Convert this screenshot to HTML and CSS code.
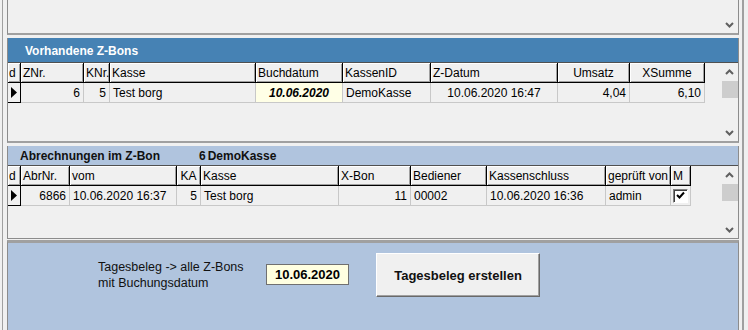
FILE: index.html
```html
<!DOCTYPE html>
<html lang="de">
<head>
  <meta charset="UTF-8" />
  <title>Z-Bons</title>
  <link rel="stylesheet" href="styles.css">
</head>
<body>
  <div class="shell">
    <div class="rail-left"></div>
    <div class="main">

      <div class="panel panel-top">
        <div class="filler"></div>
        <div class="vscroll vscroll-end">
          <div class="arrow"><svg width="9" height="6" viewBox="0 0 9 6"><path d="M1 1 L4.5 4.5 L8 1" fill="none" stroke="#606060" stroke-width="2"/></svg></div>
        </div>
      </div>

      <section class="panel panel-z">
        <div class="caption caption-dark">Vorhandene Z-Bons</div>
        <div class="panel-body">
          <div class="grid grid-z">
            <div class="hd hd-d">d</div>
            <div class="hd">ZNr.</div>
            <div class="hd">KNr.</div>
            <div class="hd">Kasse</div>
            <div class="hd">Buchdatum</div>
            <div class="hd">KassenID</div>
            <div class="hd">Z-Datum</div>
            <div class="hd mid">Umsatz</div>
            <div class="hd mid">XSumme</div>

            <div class="ind"><svg width="6" height="11" viewBox="0 0 6 11"><path d="M0 0 L6 5.5 L0 11 Z" fill="#000"/></svg></div>
            <div class="cell num">6</div>
            <div class="cell num">5</div>
            <div class="cell">Test borg</div>
            <div class="cell mid date-cell">10.06.2020</div>
            <div class="cell">DemoKasse</div>
            <div class="cell mid">10.06.2020 16:47</div>
            <div class="cell num">4,04</div>
            <div class="cell num">6,10</div>
          </div>
          <div class="vscroll">
            <div class="arrow"><svg width="9" height="6" viewBox="0 0 9 6"><path d="M1 5 L4.5 1.5 L8 5" fill="none" stroke="#606060" stroke-width="2"/></svg></div>
            <div class="thumb"></div>
            <div class="filler"></div>
            <div class="arrow"><svg width="9" height="6" viewBox="0 0 9 6"><path d="M1 1 L4.5 4.5 L8 1" fill="none" stroke="#606060" stroke-width="2"/></svg></div>
          </div>
        </div>
      </section>

      <section class="panel panel-abr">
        <div class="caption caption-light">
          <span class="caption-title">Abrechnungen im Z-Bon</span>
          <span>6</span>
          <span class="caption-kasse">DemoKasse</span>
        </div>
        <div class="panel-body">
          <div class="grid grid-abr">
            <div class="hd hd-d">d</div>
            <div class="hd">AbrNr.</div>
            <div class="hd">vom</div>
            <div class="hd mid">KA</div>
            <div class="hd">Kasse</div>
            <div class="hd">X-Bon</div>
            <div class="hd">Bediener</div>
            <div class="hd">Kassenschluss</div>
            <div class="hd">geprüft von</div>
            <div class="hd">M</div>

            <div class="ind"><svg width="6" height="11" viewBox="0 0 6 11"><path d="M0 0 L6 5.5 L0 11 Z" fill="#000"/></svg></div>
            <div class="cell num">6866</div>
            <div class="cell">10.06.2020 16:37</div>
            <div class="cell num">5</div>
            <div class="cell">Test borg</div>
            <div class="cell num">11</div>
            <div class="cell">00002</div>
            <div class="cell">10.06.2020 16:36</div>
            <div class="cell">admin</div>
            <div class="cell cell-check">
              <span class="check"><svg width="11" height="11" viewBox="0 0 11 11"><path d="M2 5 L4.5 7.5 L9 2.5" fill="none" stroke="#000" stroke-width="2"/></svg></span>
            </div>
          </div>
          <div class="vscroll">
            <div class="arrow"><svg width="9" height="6" viewBox="0 0 9 6"><path d="M1 5 L4.5 1.5 L8 5" fill="none" stroke="#606060" stroke-width="2"/></svg></div>
            <div class="thumb"></div>
            <div class="filler"></div>
            <div class="arrow"><svg width="9" height="6" viewBox="0 0 9 6"><path d="M1 1 L4.5 4.5 L8 1" fill="none" stroke="#606060" stroke-width="2"/></svg></div>
          </div>
        </div>
      </section>

      <div class="footer">
        <div class="footer-label">Tagesbeleg -&gt; alle Z-Bons<br>mit Buchungsdatum</div>
        <div class="date-box">10.06.2020</div>
        <button class="btn" type="button">Tagesbeleg erstellen</button>
      </div>

    </div>
    <div class="rail-right"></div>
  </div>
</body>
</html>
```

FILE: styles.css
```css
* {
  box-sizing: border-box;
}
html, body {
  margin: 0;
  height: 100%;
}
body {
  background: #f0f0f0;
  font-family: "Liberation Sans", Arial, sans-serif;
  font-size: 12px;
  color: #000;
  overflow: hidden;
}
.shell {
  display: flex;
  height: 330px;
}
.rail-left {
  width: 1px;
  margin-left: 2px;
  background: #a0a0a0;
}
.rail-right {
  width: 2px;
  margin-left: 3px;
  background: #a0a0a0;
}
.main {
  margin-left: 4px;
  width: 732px;
  display: flex;
  flex-direction: column;
}
.panel {
  border-left: 1px solid #8c8c8c;
  border-right: 1px solid #8c8c8c;
  background: #f0f0f0;
}
.panel-top {
  height: 35px;
  border-bottom: 2px solid #a0a0a0;
  display: flex;
}
.panel-z {
  margin-top: 3px;
  border-bottom: 2px solid #a0a0a0;
}
.panel-abr {
  margin-top: 3px;
  border-bottom: 1px solid #8c8c8c;
}
.filler {
  flex: 1;
}

/* captions */
.caption {
  font-weight: bold;
  border-bottom: 1px solid #505050;
}
.caption-dark {
  height: 25px;
  line-height: 22px;
  padding: 2px 0 0 17px;
  background: #4682b4;
  color: #fff;
}
.caption-light {
  height: 20px;
  line-height: 18px;
  padding: 1px 0 0 12px;
  background: #b0c4de;
  color: #111;
  display: flex;
}
.caption-title {
  width: 179px;
}
.caption-kasse {
  margin-left: 2px;
}

.panel-body {
  display: flex;
}
.panel-z .panel-body {
  height: 78px;
}
.panel-abr .panel-body {
  height: 72px;
}

/* grids */
.grid {
  flex: 1;
  display: grid;
  grid-auto-rows: 20px;
  align-content: start;
}
.grid-z {
  grid-template-columns: 13px 63px 26px 146px 87px 88px 127px 72px 75px;
}
.grid-abr {
  grid-template-columns: 13px 49px 107px 24px 138px 72px 76px 119px 65px 20px;
}
.hd {
  background: #f0f0f0;
  border-right: 1px solid #000;
  border-bottom: 1px solid #000;
  box-shadow: inset 1px 1px 0 #fff, inset -1px -1px 0 #a0a0a0;
  padding: 0 2px;
  line-height: 21px;
  white-space: nowrap;
  overflow: hidden;
}
.hd-d {
  padding: 0 1px;
}
.cell {
  border-right: 1px solid #c8c8c8;
  border-bottom: 1px solid #c8c8c8;
  padding: 0 3px;
  line-height: 20px;
  white-space: nowrap;
  overflow: hidden;
}
.num {
  text-align: right;
}
.mid {
  text-align: center;
}
.date-cell {
  background: #ffffe6;
  font-weight: bold;
  font-style: italic;
}
.ind {
  border-right: 1px solid #000;
  border-bottom: 1px solid #000;
  display: flex;
  align-items: center;
  justify-content: center;
}
.cell-check {
  padding: 0 0 0 2px;
  display: flex;
  align-items: center;
}
.check {
  width: 15px;
  height: 14px;
  background: #fff;
  border: 1px solid;
  border-color: #808080 #fff #fff #808080;
  box-shadow: inset 1px 1px 0 #404040;
  display: flex;
  align-items: center;
  justify-content: center;
}

/* scrollbars */
.vscroll {
  width: 17px;
  display: flex;
  flex-direction: column;
}
.vscroll-end {
  justify-content: flex-end;
}
.arrow {
  height: 17px;
  display: flex;
  align-items: center;
  justify-content: center;
}
.thumb {
  height: 17px;
  margin: 1px 0 0 1px;
  background: #cdcdcd;
}

/* footer */
.footer {
  flex: 1;
  margin-top: 1px;
  border-top: 3px solid #a0a0a0;
  border-left: 1px solid #8c8c8c;
  border-right: 1px solid #8c8c8c;
  background: #b0c4de;
  display: flex;
  align-items: flex-start;
  padding-left: 90px;
}
.footer-label {
  width: 168px;
  margin-top: 16px;
  font-size: 12.5px;
  line-height: 16px;
  color: #111;
}
.date-box {
  width: 83px;
  height: 21px;
  margin-top: 21px;
  border: 1px solid #707070;
  background: #ffffe1;
  font-weight: bold;
  font-size: 13px;
  line-height: 19px;
  text-align: center;
}
.btn {
  width: 164px;
  height: 44px;
  margin: 10px 0 0 27px;
  background: #f0f0f0;
  border: 1px solid;
  border-color: #fff #696969 #696969 #fff;
  box-shadow: inset -1px -1px 0 #a0a0a0;
  font-family: "Liberation Sans", Arial, sans-serif;
  font-size: 13px;
  font-weight: bold;
  color: #111;
  padding: 0;
}
```
